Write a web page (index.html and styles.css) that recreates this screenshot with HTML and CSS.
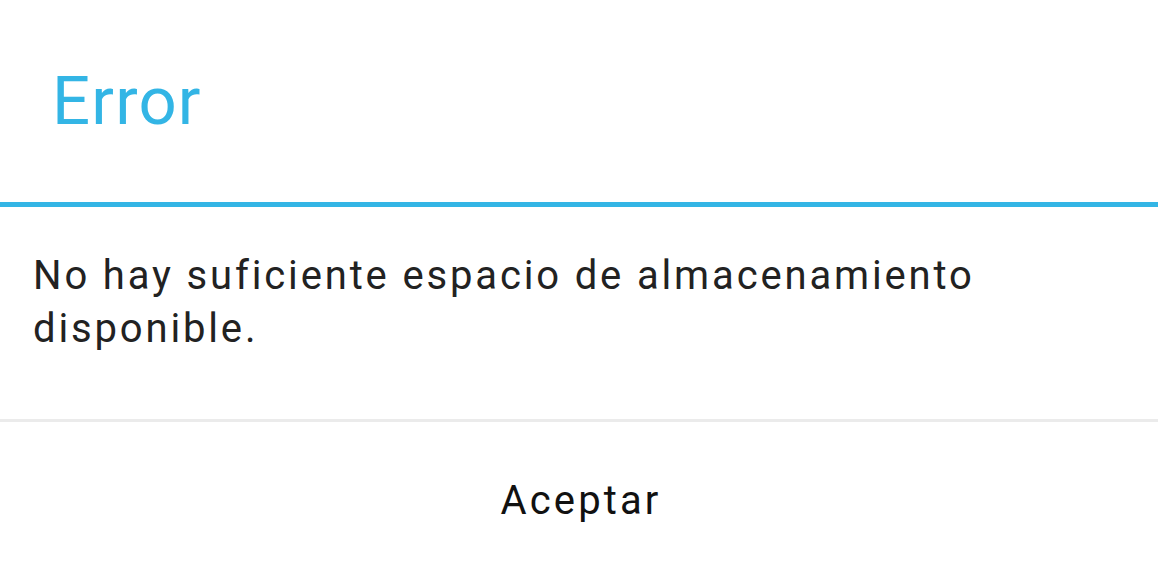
FILE: index.html
```html
<!DOCTYPE html>
<html lang="es">
<head>
    <meta charset="UTF-8">
    <meta name="viewport" content="width=device-width, initial-scale=1.0">
    <title>Error</title>
    <link rel="stylesheet" href="styles.css">
</head>
<body>

    <div class="dialog">
        <div class="dialog-title">Error</div>
        <div class="dialog-divider"></div>
        <div class="dialog-message">
            No hay suficiente espacio de almacenamiento disponible.
        </div>
        <div class="dialog-buttons">
            <button class="dialog-button">Aceptar</button>
        </div>
    </div>

</body>
</html>
```

FILE: styles.css
```css
html, body {
    margin: 0;
    height: 100%;
    background: #fff;
}

body {
    font-family: Roboto, "Noto Sans", Arial, sans-serif;
}

.dialog {
    display: flex;
    flex-direction: column;
    height: 100%;
}

.dialog-title {
    height: 202px;
    display: flex;
    align-items: center;
    padding-left: 52px;
    font-size: 67px;
    letter-spacing: 1.2px;
    color: #33b5e5;
}

.dialog-divider {
    height: 5px;
    background: #33b5e5;
}

.dialog-message {
    padding: 42px 120px 0 33px;
    height: 170px;
    font-size: 40px;
    line-height: 53px;
    letter-spacing: 2.85px;
    color: #222;
    border-bottom: 3px solid #ebebeb;
}

.dialog-buttons {
    flex: 1;
    display: flex;
}

.dialog-button {
    flex: 1;
    border: 0;
    background: transparent;
    font-family: inherit;
    font-size: 40px;
    letter-spacing: 3.1px;
    color: #111;
    padding: 5px 0 0 4px;
}
```
